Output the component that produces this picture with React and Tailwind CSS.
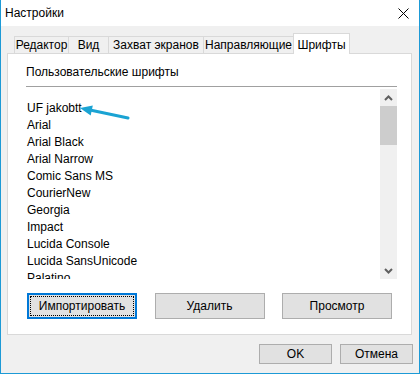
import { useState } from 'react';

const tabs = [
  { label: 'Редактор', w: 'w-[55px]' },
  { label: 'Вид', w: 'w-[41px]' },
  { label: 'Захват экранов', w: 'w-[96px]' },
  { label: 'Направляющие', w: 'w-[91px]' },
  { label: 'Шрифты', w: 'w-[57px]' },
];

const fonts = [
  'UF jakobtt',
  'Arial',
  'Arial Black',
  'Arial Narrow',
  'Comic Sans MS',
  'CourierNew',
  'Georgia',
  'Impact',
  'Lucida Console',
  'Lucida SansUnicode',
  'Palatino',
];

const Button = ({ children, className = '', focused = false }) => {
  if (focused) {
    return (
      <button className={`h-[26px] border-2 border-[#0078d7] bg-[#e1e1e1] p-px ${className}`}>
        <span className="flex h-full w-full items-center justify-center border border-dotted border-black">
          {children}
        </span>
      </button>
    );
  }
  return (
    <button className={`flex items-center justify-center border border-[#adadad] bg-[#e1e1e1] ${className}`}>
      {children}
    </button>
  );
};

const App = () => {
  const [active] = useState(4);

  return (
    <div
      className="flex h-[374px] w-[420px] flex-col border-x border-b border-[#1d9ad6] bg-[#f0f0f0] text-[12px] text-black"
      style={{ fontFamily: '"Liberation Sans", Arial, sans-serif' }}
    >
      {/* title bar */}
      <div className="flex h-[26px] items-center justify-between bg-white pl-[4px] pr-[10px]">
        <span className="text-[12px]">Настройки</span>
        <svg width="11" height="11" viewBox="0 0 11 11">
          <path d="M0.5 0.5 L10.5 10.5 M10.5 0.5 L0.5 10.5" stroke="#000" strokeWidth="1" fill="none" />
        </svg>
      </div>

      <div className="flex flex-col pl-[6px]">
        {/* tabs */}
        <div className="mt-[7px] flex h-[20px] items-end pl-[7px]">
          {tabs.map((t, i) => (
            <div
              key={t.label}
              className={`${t.w} flex items-center justify-center border-x border-t border-[#d9d9d9] ${
                i > 0 ? '-ml-px' : ''
              } ${
                i === active
                  ? 'relative z-10 -mb-px h-[21px] bg-white pt-[1px]'
                  : 'h-[17px] bg-[#f0f0f0]'
              }`}
            >
              {t.label}
            </div>
          ))}
        </div>

        {/* panel */}
        <div className="flex h-[282px] w-[405px] flex-col border border-[#d9d9d9] bg-white pl-[18px] pr-[14px]">
          <div className="mt-[11px] leading-[14px]">Пользовательские шрифты</div>
          <div className="mt-[7px] h-px bg-[#a0a0a0]" />

          <div className="mt-[2px] flex h-[190px]">
            <div className="relative flex-1 overflow-hidden pt-[11px] pl-[1px]">
              {fonts.map((f) => (
                <div key={f} className="h-[17px] leading-[17px]">
                  {f}
                </div>
              ))}
              {/* annotation arrow */}
              <svg className="absolute left-[50px] top-[12px]" width="56" height="22" viewBox="0 0 56 22">
                <path d="M14 9 L52 17" stroke="#1aa3d3" strokeWidth="3" strokeLinecap="round" fill="none" />
                <path d="M4 7 L16.8 4.5 L14.7 14.4 Z" fill="#1aa3d3" />
              </svg>
            </div>
            <div className="flex w-[17px] flex-col bg-[#f0f0f0]">
              <div className="flex h-[17px] items-center justify-center">
                <svg width="9" height="6" viewBox="0 0 9 6">
                  <path d="M1 5 L4.5 1.5 L8 5" stroke="#606060" strokeWidth="2" fill="none" />
                </svg>
              </div>
              <div className="h-[39px] bg-[#cdcdcd]" />
              <div className="flex-1" />
              <div className="flex h-[17px] items-center justify-center">
                <svg width="9" height="6" viewBox="0 0 9 6">
                  <path d="M1 1 L4.5 4.5 L8 1" stroke="#606060" strokeWidth="2" fill="none" />
                </svg>
              </div>
            </div>
          </div>

          <div className="mt-[14px] flex items-center justify-between pl-[1px] pr-[5px]">
            <Button focused className="w-[110px]">Импортировать</Button>
            <Button className="h-[26px] w-[110px]">Удалить</Button>
            <Button className="h-[26px] w-[110px]">Просмотр</Button>
          </div>
        </div>
      </div>

      {/* dialog buttons */}
      <div className="mt-[9px] flex justify-end gap-[8px] pr-[6px]">
        <Button className="h-[20px] w-[73px]">OK</Button>
        <Button className="h-[20px] w-[73px]">Отмена</Button>
      </div>
    </div>
  );
};

export default App;
